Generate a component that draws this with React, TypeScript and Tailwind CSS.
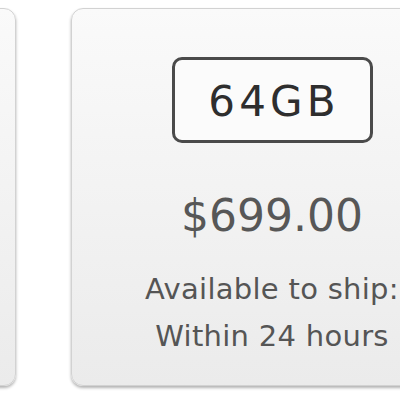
export default function App() {
  const font = { fontFamily: '"DejaVu Sans", "Liberation Sans", sans-serif' };
  return (
    <div className="w-[400px] h-[400px] overflow-hidden bg-white" style={font}>
      <div className="flex gap-[55px] pt-[8px] -ml-[184px]">
        <div className="w-[200px] h-[378px] shrink-0 rounded-[12px] border border-[#d2d2d2] bg-gradient-to-b from-[#fafafa] to-[#ebebeb] shadow-[0_2px_3px_rgba(0,0,0,0.3)]" />
        <div className="w-[402px] h-[378px] shrink-0 rounded-[12px] border border-[#d2d2d2] bg-gradient-to-b from-[#fafafa] to-[#ebebeb] shadow-[0_2px_3px_rgba(0,0,0,0.3)] flex flex-col items-center pt-[48px]">
          <div className="w-[201px] h-[86px] rounded-[10px] border-[3px] border-[#4a4a4a] bg-[#fbfbfb] flex items-center justify-center">
            <span className="text-[42px] leading-none text-[#2e2e2e] tracking-[0.1em] pl-[0.1em] pt-[3px]">64GB</span>
          </div>
          <div className="mt-[51px] text-[44px] leading-none text-[#575757]">$699.00</div>
          <div className="mt-[28px] text-[29px] leading-[47px] text-[#555] text-center tracking-[0.01em]">
            <div>Available to ship:</div>
            <div>Within 24 hours</div>
          </div>
        </div>
      </div>
    </div>
  );
}
